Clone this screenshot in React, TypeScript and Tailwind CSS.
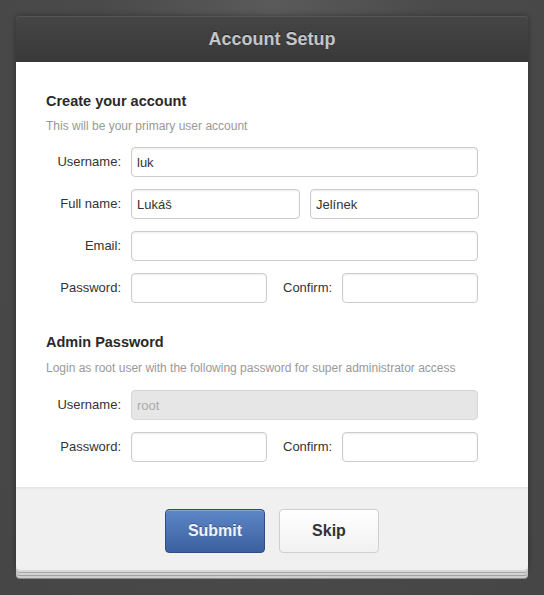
import React from "react";

const inputCls =
  "h-[30px] rounded-[4px] border border-[#cccccc] bg-white pl-[5px] pr-2 text-[13px] text-[#333] outline-none shadow-[inset_0_1px_2px_rgba(0,0,0,0.08)]";

const Label = ({ children }: { children: React.ReactNode }) => (
  <label className="w-[75px] shrink-0 text-right text-[13px] text-[#333]">{children}</label>
);

const Row = ({ label, children }: { label: string; children: React.ReactNode }) => (
  <div className="flex items-center gap-[10px]">
    <Label>{label}</Label>
    {children}
  </div>
);

const PasswordRow = () => (
  <Row label="Password:">
    <input type="password" className={`${inputCls} w-[136px]`} />
    <span className="flex-1 pl-[6px] text-[13px] text-[#333]">Confirm:</span>
    <input type="password" className={`${inputCls} w-[136px]`} />
  </Row>
);

export default function App() {
  return (
    <div className="min-h-screen bg-[#474747] bg-[radial-gradient(ellipse_at_top,#5a5a5a_0%,#4a4a4a_45%,#464646_100%)] pt-4 font-['Liberation_Sans',Arial,sans-serif]">
      <div className="mx-auto w-[512px] rounded-[4px] shadow-[0_2px_0_#d8d8d8,0_3px_0_#a8a8a8,0_5px_0_#d4d4d4,0_6px_0_#a0a0a0,0_8px_0_#cccccc,0_9px_0_#8c8c8c,0_0_6px_rgba(0,0,0,0.35)]">
        {/* header */}
        <div className="flex h-[46px] items-center justify-center rounded-t-[4px] bg-gradient-to-b from-[#454545] to-[#393939] shadow-[inset_0_1px_0_#555]">
          <h1 className="text-[18px] font-bold text-[#c2c6ca] [text-shadow:0_-1px_0_#222]">Account Setup</h1>
        </div>

        {/* body */}
        <div className="bg-white pb-[25px] pl-[30px] pr-[50px] pt-[29px]">
          <h2 className="text-[14.5px] font-bold leading-5 text-[#2a2a2a]">Create your account</h2>
          <p className="mt-[7px] text-[12px] leading-4 text-[#999]">This will be your primary user account</p>

          <div className="mt-[13px] flex flex-col gap-3">
            <Row label="Username:">
              <input defaultValue="luk" className={`${inputCls} flex-1`} />
            </Row>
            <Row label="Full name:">
              <input defaultValue="Lukáš" className={`${inputCls} w-[169px]`} />
              <input defaultValue="Jelínek" className={`${inputCls} ml-auto w-[169px]`} />
            </Row>
            <Row label="Email:">
              <input className={`${inputCls} flex-1`} />
            </Row>
            <PasswordRow />
          </div>

          <h2 className="mt-[29px] text-[14.5px] font-bold leading-5 text-[#2a2a2a]">Admin Password</h2>
          <p className="mt-[8px] text-[12px] leading-4 text-[#999]">
            Login as root user with the following password for super administrator access
          </p>

          <div className="mt-[14px] flex flex-col gap-3">
            <Row label="Username:">
              <input
                disabled
                defaultValue="root"
                className="h-[30px] flex-1 rounded-[4px] border border-[#d6d6d6] bg-[#e6e6e6] pl-[5px] text-[13px] text-[#aaa]"
              />
            </Row>
            <PasswordRow />
          </div>
        </div>

        {/* footer */}
        <div className="flex justify-center gap-[14px] rounded-b-[4px] bg-[#f0f0f0] pb-[17px] pt-[22px] shadow-[inset_0_3px_3px_-2px_rgba(0,0,0,0.08)]">
          <button className="h-[44px] w-[100px] rounded-[4px] border border-[#2e4d82] bg-gradient-to-b from-[#5d87c7] to-[#3c609e] text-[16px] font-bold text-[#eef3fb] shadow-[inset_0_1px_0_rgba(255,255,255,0.25)] [text-shadow:0_-1px_0_rgba(0,0,0,0.3)]">
            Submit
          </button>
          <button className="h-[44px] w-[100px] rounded-[4px] border border-[#cfcfcf] bg-gradient-to-b from-white to-[#f1f1f1] text-[16px] font-bold text-[#333]">
            Skip
          </button>
        </div>
      </div>
    </div>
  );
}
